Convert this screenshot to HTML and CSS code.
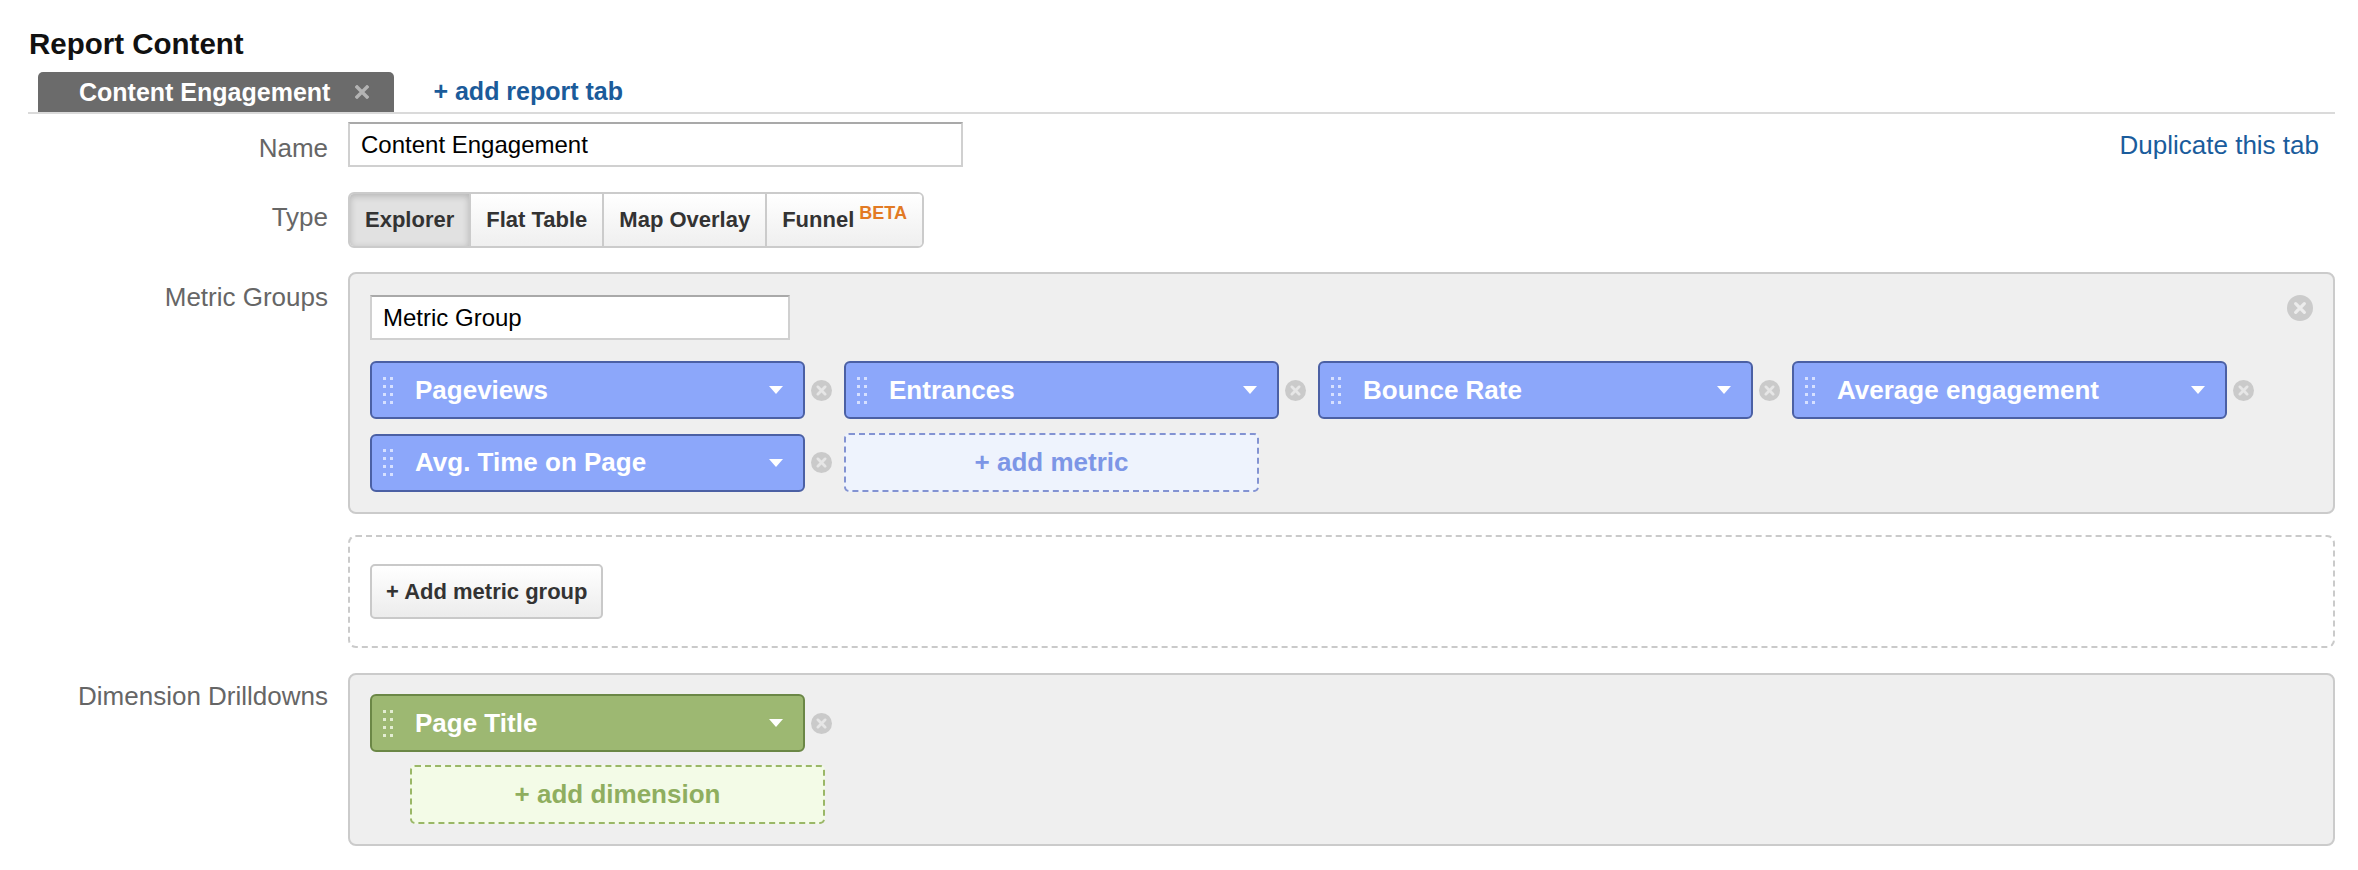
FILE: index.html
```html
<!DOCTYPE html>
<html>
<head>
<meta charset="utf-8">
<link rel="stylesheet" href="styles.css">
</head>
<body>
<div class="page">
  <h2 class="title">Report Content</h2>
  <div class="tabbar">
    <div class="tab">
      <span>Content Engagement</span>
      <span class="tab-x"><svg width="14" height="14" viewBox="0 0 14 14"><path d="M2 2L12 12M12 2L2 12" stroke="#b3b3b3" stroke-width="3.4" stroke-linecap="square"/></svg></span>
    </div>
    <a class="add-tab">+ add report tab</a>
  </div>

  <div class="row row-name">
    <div class="label">Name</div>
    <div class="name-field">
      <input class="text-input name-input" type="text" value="Content Engagement">
      <a class="dup">Duplicate this tab</a>
    </div>
  </div>

  <div class="row row-type">
    <div class="label">Type</div>
    <div class="field">
      <div class="seg">
        <div class="seg-btn active">Explorer</div>
        <div class="seg-btn">Flat Table</div>
        <div class="seg-btn">Map Overlay</div>
        <div class="seg-btn"><span>Funnel<sup class="beta">BETA</sup></span></div>
      </div>
    </div>
  </div>

  <div class="row row-metric">
    <div class="label">Metric Groups</div>
    <div class="group-box">
      <input class="text-input mg-input" type="text" value="Metric Group">
      <svg class="close-lg" viewBox="0 0 24 24"><circle cx="12" cy="12" r="12" fill="#cbcbcb"/><path d="M8 8L16 16M16 8L8 16" stroke="#ececec" stroke-width="3" stroke-linecap="round"/></svg>
      <div class="pills">
        <div class="item">
          <div class="pill"><svg class="handle" width="11" height="27" viewBox="0 0 11 27"><g fill="#d6e0ff"><rect x="0" y="0" width="3" height="3"/><rect x="7" y="0" width="3" height="3"/><rect x="0" y="8" width="3" height="3"/><rect x="7" y="8" width="3" height="3"/><rect x="0" y="16" width="3" height="3"/><rect x="7" y="16" width="3" height="3"/><rect x="0" y="24" width="3" height="3"/><rect x="7" y="24" width="3" height="3"/></g></svg><span class="pill-text">Pageviews</span><svg class="caret" width="14" height="8" viewBox="0 0 14 8"><path d="M0 0H14L7 8Z" fill="#fff"/></svg></div>
          <svg class="x-sm" viewBox="0 0 20 20"><circle cx="10" cy="10" r="10" fill="#cacaca"/><path d="M6.5 6.5L13.5 13.5M13.5 6.5L6.5 13.5" stroke="#e6e6e6" stroke-width="2.6" stroke-linecap="round"/></svg>
        </div>
        <div class="item">
          <div class="pill"><svg class="handle" width="11" height="27" viewBox="0 0 11 27"><g fill="#d6e0ff"><rect x="0" y="0" width="3" height="3"/><rect x="7" y="0" width="3" height="3"/><rect x="0" y="8" width="3" height="3"/><rect x="7" y="8" width="3" height="3"/><rect x="0" y="16" width="3" height="3"/><rect x="7" y="16" width="3" height="3"/><rect x="0" y="24" width="3" height="3"/><rect x="7" y="24" width="3" height="3"/></g></svg><span class="pill-text">Entrances</span><svg class="caret" width="14" height="8" viewBox="0 0 14 8"><path d="M0 0H14L7 8Z" fill="#fff"/></svg></div>
          <svg class="x-sm" viewBox="0 0 20 20"><circle cx="10" cy="10" r="10" fill="#cacaca"/><path d="M6.5 6.5L13.5 13.5M13.5 6.5L6.5 13.5" stroke="#e6e6e6" stroke-width="2.6" stroke-linecap="round"/></svg>
        </div>
        <div class="item">
          <div class="pill"><svg class="handle" width="11" height="27" viewBox="0 0 11 27"><g fill="#d6e0ff"><rect x="0" y="0" width="3" height="3"/><rect x="7" y="0" width="3" height="3"/><rect x="0" y="8" width="3" height="3"/><rect x="7" y="8" width="3" height="3"/><rect x="0" y="16" width="3" height="3"/><rect x="7" y="16" width="3" height="3"/><rect x="0" y="24" width="3" height="3"/><rect x="7" y="24" width="3" height="3"/></g></svg><span class="pill-text">Bounce Rate</span><svg class="caret" width="14" height="8" viewBox="0 0 14 8"><path d="M0 0H14L7 8Z" fill="#fff"/></svg></div>
          <svg class="x-sm" viewBox="0 0 20 20"><circle cx="10" cy="10" r="10" fill="#cacaca"/><path d="M6.5 6.5L13.5 13.5M13.5 6.5L6.5 13.5" stroke="#e6e6e6" stroke-width="2.6" stroke-linecap="round"/></svg>
        </div>
        <div class="item">
          <div class="pill"><svg class="handle" width="11" height="27" viewBox="0 0 11 27"><g fill="#d6e0ff"><rect x="0" y="0" width="3" height="3"/><rect x="7" y="0" width="3" height="3"/><rect x="0" y="8" width="3" height="3"/><rect x="7" y="8" width="3" height="3"/><rect x="0" y="16" width="3" height="3"/><rect x="7" y="16" width="3" height="3"/><rect x="0" y="24" width="3" height="3"/><rect x="7" y="24" width="3" height="3"/></g></svg><span class="pill-text">Average engagement</span><svg class="caret" width="14" height="8" viewBox="0 0 14 8"><path d="M0 0H14L7 8Z" fill="#fff"/></svg></div>
          <svg class="x-sm" viewBox="0 0 20 20"><circle cx="10" cy="10" r="10" fill="#cacaca"/><path d="M6.5 6.5L13.5 13.5M13.5 6.5L6.5 13.5" stroke="#e6e6e6" stroke-width="2.6" stroke-linecap="round"/></svg>
        </div>
        <div class="item">
          <div class="pill"><svg class="handle" width="11" height="27" viewBox="0 0 11 27"><g fill="#d6e0ff"><rect x="0" y="0" width="3" height="3"/><rect x="7" y="0" width="3" height="3"/><rect x="0" y="8" width="3" height="3"/><rect x="7" y="8" width="3" height="3"/><rect x="0" y="16" width="3" height="3"/><rect x="7" y="16" width="3" height="3"/><rect x="0" y="24" width="3" height="3"/><rect x="7" y="24" width="3" height="3"/></g></svg><span class="pill-text">Avg. Time on Page</span><svg class="caret" width="14" height="8" viewBox="0 0 14 8"><path d="M0 0H14L7 8Z" fill="#fff"/></svg></div>
          <svg class="x-sm" viewBox="0 0 20 20"><circle cx="10" cy="10" r="10" fill="#cacaca"/><path d="M6.5 6.5L13.5 13.5M13.5 6.5L6.5 13.5" stroke="#e6e6e6" stroke-width="2.6" stroke-linecap="round"/></svg>
        </div>
        <div class="add-metric">+ add metric</div>
      </div>
    </div>
  </div>

  <div class="row row-addgroup">
    <div class="label"></div>
    <div class="addgroup-box">
      <div class="btn">+ Add metric group</div>
    </div>
  </div>

  <div class="row row-dim">
    <div class="label">Dimension Drilldowns</div>
    <div class="dim-box">
      <div class="item">
        <div class="pill green"><svg class="handle" width="11" height="27" viewBox="0 0 11 27"><g fill="#e3edd2"><rect x="0" y="0" width="3" height="3"/><rect x="7" y="0" width="3" height="3"/><rect x="0" y="8" width="3" height="3"/><rect x="7" y="8" width="3" height="3"/><rect x="0" y="16" width="3" height="3"/><rect x="7" y="16" width="3" height="3"/><rect x="0" y="24" width="3" height="3"/><rect x="7" y="24" width="3" height="3"/></g></svg><span class="pill-text">Page Title</span><svg class="caret" width="14" height="8" viewBox="0 0 14 8"><path d="M0 0H14L7 8Z" fill="#fff"/></svg></div>
        <svg class="x-sm" viewBox="0 0 20 20"><circle cx="10" cy="10" r="10" fill="#cacaca"/><path d="M6.5 6.5L13.5 13.5M13.5 6.5L6.5 13.5" stroke="#e6e6e6" stroke-width="2.6" stroke-linecap="round"/></svg>
      </div>
      <div class="add-dim">+ add dimension</div>
    </div>
  </div>
</div>
</body>
</html>
```

FILE: styles.css
```css
* { box-sizing: border-box; }

body {
  margin: 0;
  background: #fff;
  color: #000;
  font-family: "Liberation Sans", Arial, sans-serif;
}

.page {
  padding: 27px 23px 0 28px;
}

.title {
  margin: 0;
  padding-left: 1px;
  font-size: 29.5px;
  line-height: 34px;
  font-weight: bold;
  color: #111;
}

.tabbar {
  margin-top: 11px;
  display: flex;
  align-items: center;
  height: 42px;
  padding-left: 10px;
  border-bottom: 2px solid #dadada;
}

.tab {
  height: 40px;
  align-self: flex-start;
  display: flex;
  align-items: center;
  padding: 0 25px 0 41px;
  background: #6b6b6b;
  border-radius: 5px 5px 0 0;
  color: #fff;
  font-size: 25px;
  font-weight: bold;
}

.tab-x {
  display: flex;
  margin-left: 25px;
}

.add-tab {
  margin-left: 39px;
  margin-bottom: 2px;
  color: #1b5b9a;
  font-size: 25px;
  font-weight: bold;
  text-decoration: none;
}

.row {
  display: grid;
  grid-template-columns: 300px 1fr;
  column-gap: 20px;
}

.label {
  text-align: right;
  font-size: 26px;
  line-height: 30px;
  color: #666;
  padding-top: 10px;
}

.row-name { margin-top: 8px; }
.row-name .label { padding-top: 11px; }

.name-field {
  display: flex;
  justify-content: space-between;
  align-items: flex-start;
}

.text-input {
  display: block;
  height: 45px;
  padding: 0 11px;
  border: 2px solid #d0d0d0;
  border-top-color: #a9a9a9;
  border-radius: 0;
  background: #fff;
  color: #000;
  font-family: "Liberation Sans", Arial, sans-serif;
  font-size: 24px;
  outline: none;
}

.name-input { width: 615px; }

.dup {
  margin: 8px 16px 0 0;
  font-size: 26px;
  line-height: 30px;
  color: #1a5c9c;
  text-decoration: none;
}

.row-type { margin-top: 25px; }

.seg {
  display: inline-flex;
  height: 56px;
  border: 2px solid #cbcbcb;
  border-radius: 6px;
  overflow: hidden;
}

.seg-btn {
  display: flex;
  align-items: center;
  padding: 0 15px;
  background: linear-gradient(#ffffff, #efefef);
  color: #333;
  font-size: 22px;
  font-weight: bold;
}

.seg-btn + .seg-btn { border-left: 2px solid #cbcbcb; }

.seg-btn.active {
  background: #e1e1e1;
  box-shadow: inset 0 2px 7px rgba(0, 0, 0, 0.2);
}

.beta {
  margin-left: 5px;
  font-size: 18px;
  line-height: 0;
  vertical-align: 8px;
  color: #e27a24;
}

.row-metric { margin-top: 24px; }

.group-box {
  position: relative;
  padding: 21px 20px 20px;
  background: #efefef;
  border: 2px solid #cbcbcb;
  border-radius: 8px;
}

.mg-input { width: 420px; }

.close-lg {
  position: absolute;
  top: 21px;
  right: 20px;
  width: 26px;
  height: 26px;
}

.pills {
  display: flex;
  flex-wrap: wrap;
  row-gap: 14px;
  margin-top: 21px;
}

.item {
  display: flex;
  align-items: center;
}

.pill {
  width: 435px;
  height: 58px;
  display: flex;
  align-items: center;
  padding: 0 20px 0 11px;
  background: #8ca7fa;
  border: 2px solid #4b60a4;
  border-radius: 6px;
  color: #fff;
  font-size: 26px;
  font-weight: bold;
}

.pill.green {
  background: #9db872;
  border-color: #6b8746;
}

.handle, .caret { flex: none; }

.pill-text {
  flex: 1;
  margin-left: 21px;
  white-space: nowrap;
}

.x-sm {
  flex: none;
  width: 21px;
  height: 21px;
  margin: 0 12px 0 6px;
}

.add-metric {
  width: 415px;
  height: 59px;
  display: flex;
  align-items: center;
  justify-content: center;
  background: #eef3fd;
  border: 2px dashed #8393d2;
  border-radius: 5px;
  color: #7d96e6;
  font-size: 26px;
  font-weight: bold;
}

.row-addgroup { margin-top: 21px; }

.addgroup-box {
  padding: 27px 20px;
  border: 2px dashed #cacaca;
  border-radius: 8px;
}

.btn {
  display: inline-flex;
  align-items: center;
  height: 55px;
  padding: 0 14px;
  background: linear-gradient(#ffffff, #ececec);
  border: 2px solid #c9c9c9;
  border-radius: 5px;
  color: #333;
  font-size: 22px;
  font-weight: bold;
}

.row-dim { margin-top: 25px; }
.row-dim .label { padding-top: 8px; }

.dim-box {
  padding: 19px 20px 20px;
  background: #efefef;
  border: 2px solid #cbcbcb;
  border-radius: 8px;
}

.add-dim {
  width: 415px;
  height: 59px;
  margin: 13px 0 0 40px;
  display: flex;
  align-items: center;
  justify-content: center;
  background: #f3fbe7;
  border: 2px dashed #9ab767;
  border-radius: 5px;
  color: #8fae5f;
  font-size: 26px;
  font-weight: bold;
}
```
